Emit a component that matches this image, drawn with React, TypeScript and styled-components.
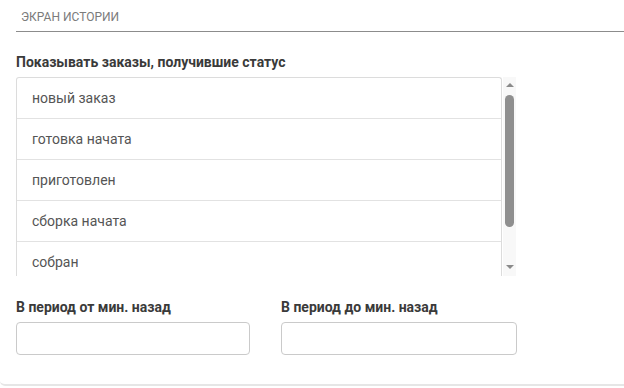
import styled, { createGlobalStyle } from "styled-components";

const GlobalStyle = createGlobalStyle`
	html, body {
		margin: 0;
		padding: 0;
		background: #fff;
	}

	body {
		font-family: Roboto, "Liberation Sans", Arial, sans-serif;
	}
`;

const Card = styled.div`
	width: 100%;
	box-sizing: border-box;
	padding: 0 0 29px 16px;

	border-bottom: 2px solid #e6e6e6;
	border-bottom-left-radius: 5px;
	background: #fff;
`;

const Header = styled.div`
	padding: 10px 0 7px 5px;

	font-size: 12px;
	line-height: 14px;
	text-transform: uppercase;
	color: #7b7b7b;

	border-bottom: 1px solid #8c8c8c;
`;

const Label = styled.div<{ top?: number }>`
	margin: ${(props) => props.top ?? 0}px 0 7px 0;

	font-size: 14px;
	font-weight: 700;
	line-height: 16px;
	color: #3a3a3a;
`;

const ListFrame = styled.div`
	display: flex;
	height: 199px;
	overflow: hidden;
`;

const List = styled.ul`
	width: 486px;
	box-sizing: border-box;
	margin: 0;
	padding: 0;
	list-style: none;

	border: 1px solid #dcdcdc;
	border-bottom: none;
	border-radius: 3px 3px 0 0;
`;

const Row = styled.li`
	display: flex;
	align-items: center;
	height: 40px;
	padding-left: 15px;

	font-size: 14px;
	color: #555;

	border-bottom: 1px solid #e2e2e2;
`;

const Track = styled.div`
	display: flex;
	flex-direction: column;
	align-items: center;

	width: 13px;
	margin-left: 1px;
	padding: 6px 0 7px 0;
	box-sizing: border-box;

	background: #f8f8f8;
`;

const Arrow = styled.div<{ down?: boolean }>`
	width: 0;
	height: 0;
	border-left: 4px solid transparent;
	border-right: 4px solid transparent;
	${(props) =>
		props.down
			? "border-top: 4px solid #8a8a8a; margin-top: auto;"
			: "border-bottom: 4px solid #8a8a8a;"}
`;

const Thumb = styled.div`
	width: 9px;
	height: 132px;
	margin-top: 8px;

	border-radius: 5px;
	background: #8f8f8f;
`;

const Fields = styled.div`
	display: grid;
	grid-template-columns: 234px 236px;
	column-gap: 31px;
	margin-top: 23px;
`;

const Field = styled.div`
	display: flex;
	flex-direction: column;
`;

const Input = styled.input`
	height: 33px;
	box-sizing: border-box;
	margin: 0;
	padding: 0 10px;

	font-family: inherit;
	font-size: 14px;

	border: 1px solid #cacaca;
	border-radius: 4px;
	outline: none;
	background: #fff;
`;

const statuses = ["новый заказ", "готовка начата", "приготовлен", "сборка начата", "собран"];

const App = () => {
	return (
		<>
			<GlobalStyle />
			<Card>
				<Header>Экран истории</Header>
				<Label top={22}>Показывать заказы, получившие статус</Label>
				<ListFrame>
					<List>
						{statuses.map((status) => (
							<Row key={status}>{status}</Row>
						))}
					</List>
					<Track>
						<Arrow />
						<Thumb />
						<Arrow down />
					</Track>
				</ListFrame>
				<Fields>
					<Field>
						<Label>В период от мин. назад</Label>
						<Input />
					</Field>
					<Field>
						<Label>В период до мин. назад</Label>
						<Input />
					</Field>
				</Fields>
			</Card>
		</>
	);
};

export default App;
